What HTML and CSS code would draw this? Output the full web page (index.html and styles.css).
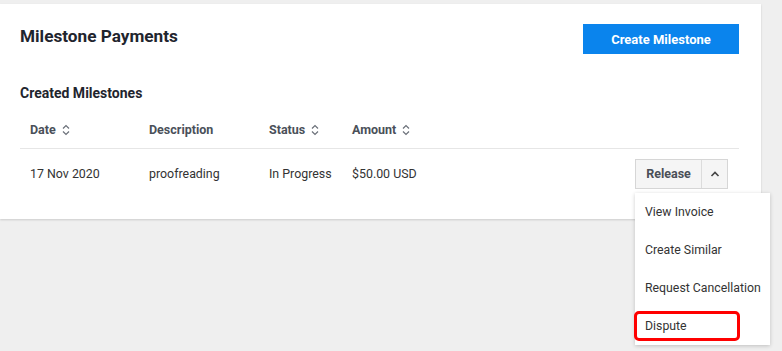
FILE: index.html
```html
<!DOCTYPE html>
<html lang="en">
<head>
    <meta charset="UTF-8">
    <meta name="viewport" content="width=device-width, initial-scale=1.0">
    <link rel="stylesheet" href="styles.css">
    <title>Milestone Payments</title>
</head>
<body>
    <div class="card">
        <div class="card-header">
            <h1>Milestone Payments</h1>
            <button class="primary">Create Milestone</button>
        </div>

        <h2>Created Milestones</h2>

        <div class="table">
            <div class="row head">
                <div class="cell">Date <svg class="sort" viewBox="0 0 8 12"><path d="M1 4.5 4 1.5 7 4.5M1 7.5 4 10.5 7 7.5"/></svg></div>
                <div class="cell">Description</div>
                <div class="cell">Status <svg class="sort" viewBox="0 0 8 12"><path d="M1 4.5 4 1.5 7 4.5M1 7.5 4 10.5 7 7.5"/></svg></div>
                <div class="cell">Amount <svg class="sort" viewBox="0 0 8 12"><path d="M1 4.5 4 1.5 7 4.5M1 7.5 4 10.5 7 7.5"/></svg></div>
                <div class="cell"></div>
            </div>
            <div class="row">
                <div class="cell">17 Nov 2020</div>
                <div class="cell">proofreading</div>
                <div class="cell">In Progress</div>
                <div class="cell">$50.00 USD</div>
                <div class="cell actions">
                    <div class="split">
                        <button class="release">Release</button>
                        <button class="toggle"><svg viewBox="0 0 10 6"><path d="M1.5 5 5 1.5 8.5 5"/></svg></button>
                        <ul class="menu">
                            <li>View Invoice</li>
                            <li>Create Similar</li>
                            <li>Request Cancellation</li>
                            <li class="marked">Dispute</li>
                        </ul>
                    </div>
                </div>
            </div>
        </div>
    </div>
</body>
</html>
```

FILE: styles.css
```css
body {
    font-family: 'Roboto', 'Liberation Sans', sans-serif;
    margin: 0;
    padding-top: 4px;
    background-color: #efefef;
    height: 347px;
    overflow: hidden;
}

.card {
    width: 761px;
    box-sizing: border-box;
    padding: 20px 22px 19px 20px;
    background-color: #fff;
    box-shadow: 0 1px 2px rgba(0, 0, 0, 0.15);
}

.card-header {
    display: flex;
    justify-content: space-between;
    align-items: flex-start;
}

h1 {
    margin: 0;
    font-size: 17.2px;
    line-height: 24px;
    font-weight: 700;
    color: #1f252e;
}

.primary {
    width: 156px;
    height: 30px;
    border: none;
    background-color: #0a84ed;
    color: #fff;
    font-family: inherit;
    font-size: 13px;
    font-weight: 700;
    cursor: pointer;
}

h2 {
    margin: 30px 0 9px;
    font-size: 14px;
    line-height: 18px;
    font-weight: 700;
    color: #1f252e;
}

.row {
    display: grid;
    grid-template-columns: 119px 120px 83px 120px 1fr;
    align-items: center;
    height: 51px;
    box-sizing: border-box;
    padding-bottom: 2px;
    font-size: 12.4px;
    color: #333;
}

.row.head {
    height: 38px;
    padding-bottom: 0;
    border-bottom: 1px solid #e6e6e6;
    font-size: 12.5px;
    font-weight: 700;
    color: #4a5059;
}

.cell {
    padding-left: 10px;
    display: flex;
    align-items: center;
    white-space: nowrap;
}

.sort {
    width: 8px;
    height: 12px;
    margin-left: 6px;
    fill: none;
    stroke: #6b7079;
    stroke-width: 1.2;
}

.actions {
    justify-content: flex-end;
    padding-right: 11px;
}

.split {
    position: relative;
    display: flex;
    height: 30px;
    border: 1px solid #d6d6d6;
    box-sizing: border-box;
    background-color: #f5f5f5;
}

.split button {
    border: none;
    background: transparent;
    font-family: inherit;
    cursor: pointer;
}

.release {
    width: 66px;
    font-size: 12.5px;
    font-weight: 700;
    color: #4a4f57;
    border-right: 1px solid #dcdcdc !important;
}

.toggle {
    width: 25px;
    display: flex;
    align-items: center;
    justify-content: center;
}

.toggle svg {
    width: 10px;
    height: 6px;
    fill: none;
    stroke: #444;
    stroke-width: 1.6;
}

.menu {
    position: absolute;
    top: 33px;
    left: -1px;
    width: 135px;
    margin: 0;
    padding: 0;
    list-style: none;
    background-color: #fff;
    box-shadow: 0 1px 4px rgba(0, 0, 0, 0.2);
}

.menu li {
    position: relative;
    height: 38px;
    line-height: 38px;
    padding-left: 10px;
    font-size: 12.3px;
    color: #333;
}

.menu li.marked::after {
    content: '';
    position: absolute;
    left: -1px;
    top: 4px;
    width: 106px;
    height: 30px;
    box-sizing: border-box;
    border: 3px solid #f00;
    border-radius: 5px;
}
```
